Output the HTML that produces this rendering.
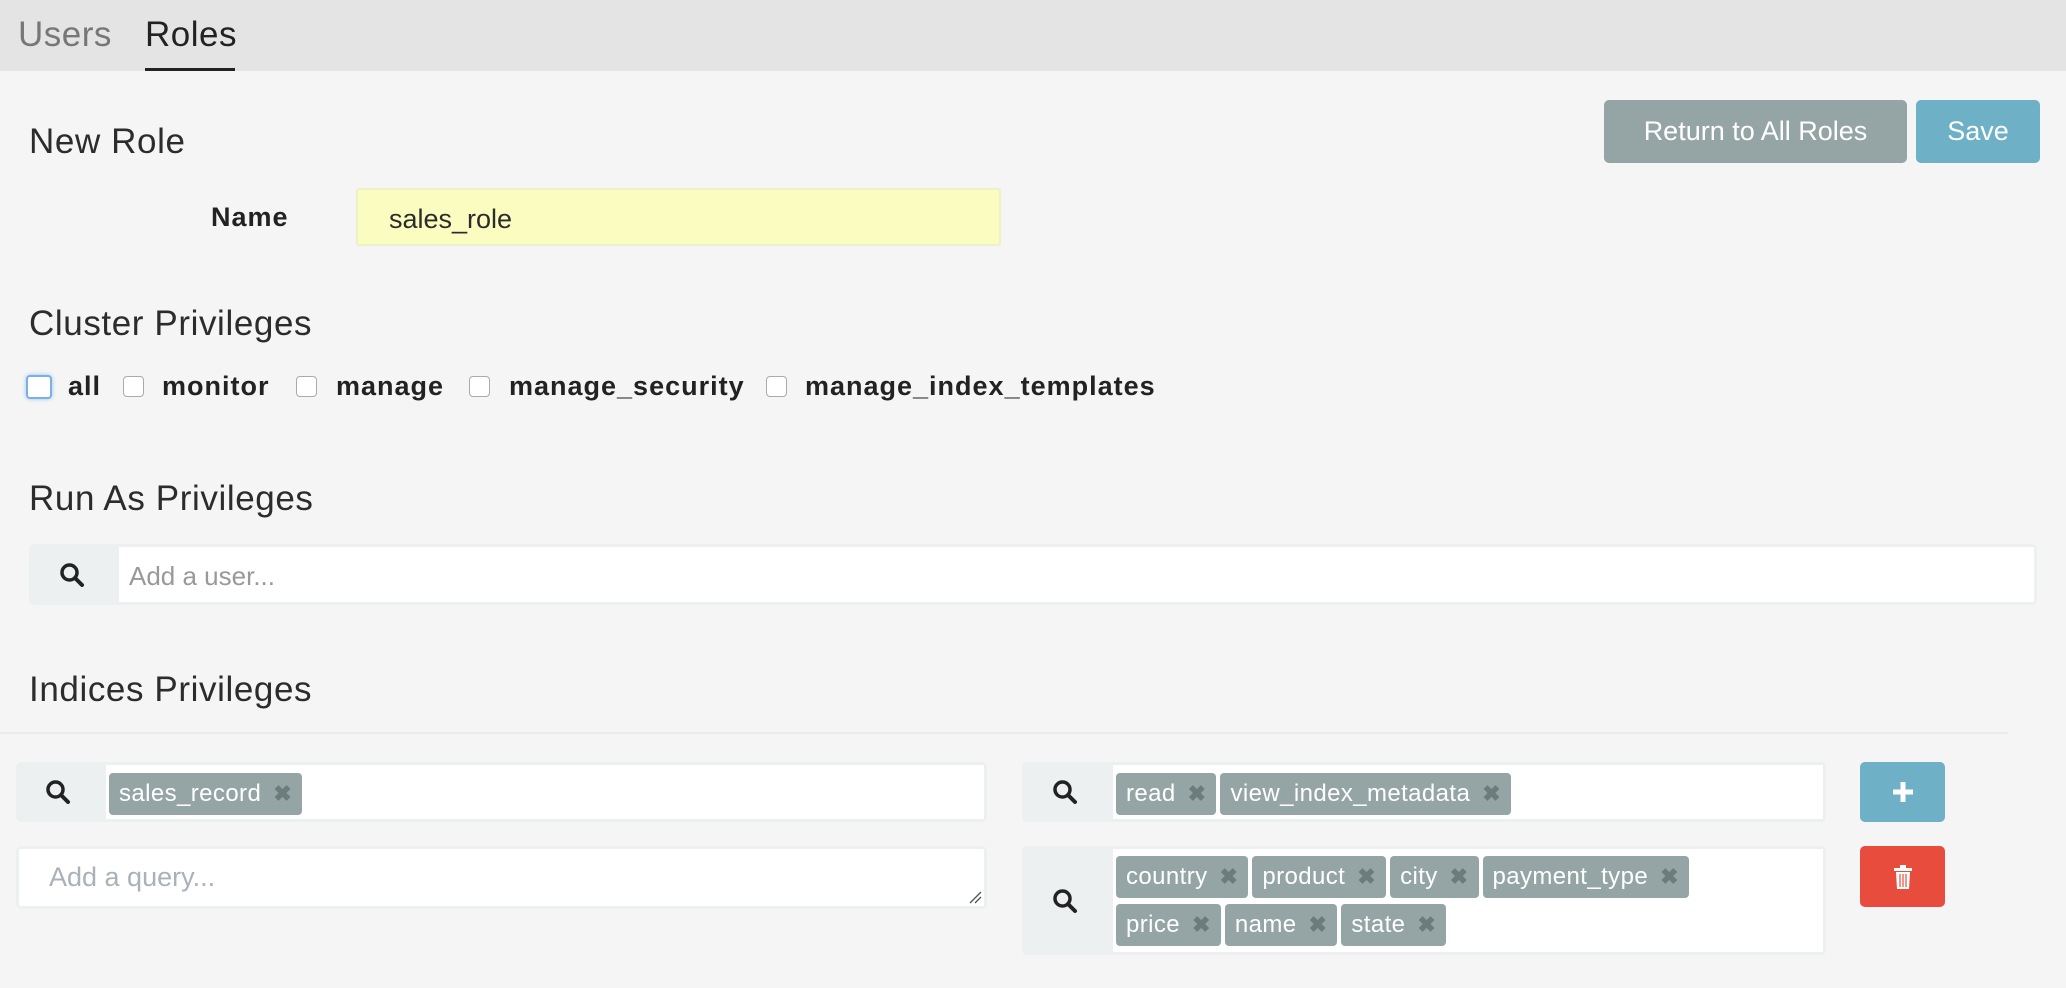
<!DOCTYPE html>
<html><head><meta charset="utf-8"><style>
*{box-sizing:border-box;margin:0;padding:0}
body{width:2066px;height:988px;background:#f5f5f5;font-family:"Liberation Sans",sans-serif;color:#2c2c2c;position:relative;overflow:hidden}
.a{position:absolute}
.top{left:0;top:0;width:2066px;height:71px;background:#e4e4e4}
.h{font-size:35px;color:#2c2c2c;letter-spacing:0.6px}
.btn{border-radius:5px;color:#fff;font-size:27px;display:flex;align-items:center;justify-content:center}
.cb{width:21px;height:21px;border:1.5px solid #aaa;border-radius:4px;background:#fff}
.lb{font-size:27px;font-weight:bold;color:#222;letter-spacing:1px}
.box{background:#ecf0f1;border-radius:5px}
.in{background:#fff;position:absolute;top:3px;bottom:3px;right:3px}
.tag{display:inline-flex;align-items:center;height:42px;background:#95a5a6;color:#fff;border-radius:4px;font-size:24px;letter-spacing:0.4px;padding:0 10px;margin:0 4px 6px 0}
.tag b{color:#6e7b7c;margin-left:12px;font-size:22px}
.mag{position:absolute}
</style></head><body>
<div class="a top"></div>
<div class="a" style="left:18px;top:15px;font-size:35px;color:#777;letter-spacing:0.5px">Users</div>
<div class="a" style="left:145px;top:15px;font-size:35px;color:#222;letter-spacing:0.5px">Roles</div>
<div class="a" style="left:145px;top:68px;width:90px;height:3px;background:#222"></div>

<div class="a h" style="left:29px;top:122px">New Role</div>
<div class="a btn" style="left:1604px;top:100px;width:303px;height:63px;background:#95a5a6">Return to All Roles</div>
<div class="a btn" style="left:1916px;top:100px;width:124px;height:63px;background:#6eb0c5">Save</div>

<div class="a lb" style="left:211px;top:202px">Name</div>
<div class="a" style="left:356px;top:188px;width:645px;height:58px;background:#fbfdc0;border:2px solid #eef0c8;border-radius:3px;font-size:27px;padding:14px 0 0 31px">sales_role</div>

<div class="a h" style="left:29px;top:304px">Cluster Privileges</div>
<div class="a cb" style="left:26px;top:375px;width:26px;height:24px;border:2px solid #7ab0e8;box-shadow:0 0 4px #9cc4f0"></div>
<div class="a lb" style="left:68px;top:371px">all</div>
<div class="a cb" style="left:123px;top:376px"></div>
<div class="a lb" style="left:162px;top:371px">monitor</div>
<div class="a cb" style="left:296px;top:376px"></div>
<div class="a lb" style="left:336px;top:371px">manage</div>
<div class="a cb" style="left:469px;top:376px"></div>
<div class="a lb" style="left:509px;top:371px">manage_security</div>
<div class="a cb" style="left:766px;top:376px"></div>
<div class="a lb" style="left:805px;top:371px">manage_index_templates</div>

<div class="a h" style="left:29px;top:479px">Run As Privileges</div>
<div class="a box" style="left:29px;top:544px;width:2008px;height:61px">
<svg class="mag" style="left:30px;top:18px" width="26" height="26" viewBox="0 0 26 26"><circle cx="10.5" cy="10.5" r="7.5" fill="none" stroke="#222" stroke-width="3.5"/><line x1="16" y1="16" x2="23" y2="23" stroke="#222" stroke-width="4" stroke-linecap="round"/></svg>
<div class="in" style="left:90px;font-size:26px;color:#999;padding:14px 0 0 10px">Add a user...</div></div>

<div class="a h" style="left:29px;top:670px">Indices Privileges</div>
<div class="a" style="left:0;top:732px;width:2008px;height:2px;background:#e8ecec"></div>

<div class="a box" style="left:16px;top:762px;width:971px;height:60px">
<svg class="mag" style="left:29px;top:17px" width="26" height="26" viewBox="0 0 26 26"><circle cx="10.5" cy="10.5" r="7.5" fill="none" stroke="#222" stroke-width="3.5"/><line x1="16" y1="16" x2="23" y2="23" stroke="#222" stroke-width="4" stroke-linecap="round"/></svg>
<div class="in" style="left:90px;padding:8px 0 0 3px"><span class="tag">sales_record<b>✖</b></span></div></div>

<div class="a" style="left:16px;top:846px;width:971px;height:63px;background:#fff;border:3px solid #ecf0f1;border-radius:5px;font-size:27px;color:#a9b1ba;padding:13px 0 0 30px">Add a query...
<svg class="a" style="right:2px;bottom:2px" width="14" height="14"><line x1="2" y1="13" x2="13" y2="2" stroke="#555" stroke-width="1.3"/><line x1="7" y1="13" x2="13" y2="7" stroke="#555" stroke-width="1.3"/></svg></div>

<div class="a box" style="left:1022px;top:762px;width:804px;height:60px">
<svg class="mag" style="left:30px;top:17px" width="26" height="26" viewBox="0 0 26 26"><circle cx="10.5" cy="10.5" r="7.5" fill="none" stroke="#222" stroke-width="3.5"/><line x1="16" y1="16" x2="23" y2="23" stroke="#222" stroke-width="4" stroke-linecap="round"/></svg>
<div class="in" style="left:91px;padding:8px 0 0 3px"><span class="tag">read<b>✖</b></span><span class="tag">view_index_metadata<b>✖</b></span></div></div>

<div class="a box" style="left:1022px;top:846px;width:804px;height:109px">
<svg class="mag" style="left:30px;top:42px" width="26" height="26" viewBox="0 0 26 26"><circle cx="10.5" cy="10.5" r="7.5" fill="none" stroke="#222" stroke-width="3.5"/><line x1="16" y1="16" x2="23" y2="23" stroke="#222" stroke-width="4" stroke-linecap="round"/></svg>
<div class="in" style="left:91px;padding:7px 0 0 3px"><span class="tag">country<b>✖</b></span><span class="tag">product<b>✖</b></span><span class="tag">city<b>✖</b></span><span class="tag">payment_type<b>✖</b></span><br><span class="tag">price<b>✖</b></span><span class="tag">name<b>✖</b></span><span class="tag">state<b>✖</b></span></div></div>

<div class="a btn" style="left:1860px;top:762px;width:85px;height:60px;background:#6eb0c5">
<svg width="20" height="20"><rect x="7.5" y="0" width="5" height="20" fill="#fff"/><rect x="0" y="7.5" width="20" height="5" fill="#fff"/></svg></div>
<div class="a btn" style="left:1860px;top:846px;width:85px;height:61px;background:#e74c3c">
<svg width="18" height="24" viewBox="0 0 18 24"><rect x="6" y="0" width="6" height="3" fill="#fff"/><rect x="0" y="3" width="18" height="3" fill="#fff"/><path d="M2 7h14l-1 17H3z" fill="#fff"/><line x1="6" y1="9" x2="6" y2="22" stroke="#e74c3c" stroke-width="1.2"/><line x1="9" y1="9" x2="9" y2="22" stroke="#e74c3c" stroke-width="1.2"/><line x1="12" y1="9" x2="12" y2="22" stroke="#e74c3c" stroke-width="1.2"/></svg></div>
</body></html>
